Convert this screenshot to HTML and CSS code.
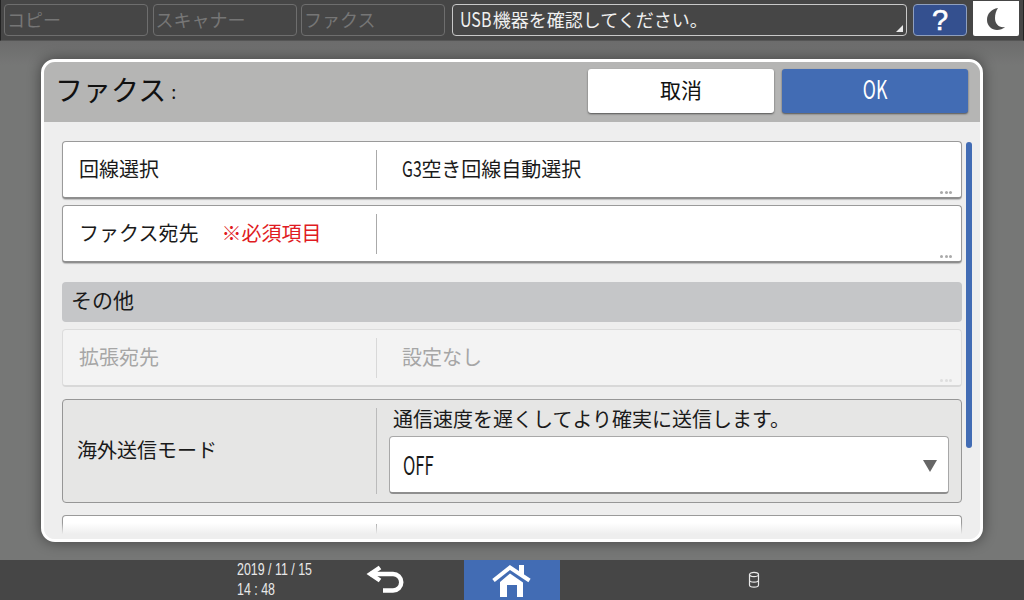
FILE: index.html
```html
<!DOCTYPE html>
<html lang="ja">
<head>
<meta charset="utf-8">
<title>ファクス</title>
<link rel="stylesheet" href="styles.css">
</head>
<body>
<div class="screen">
  <header class="topbar">
    <div class="tab">コピー</div>
    <div class="tab">スキャナー</div>
    <div class="tab">ファクス</div>
    <div class="status"><span class="n-usb">USB</span>機器を確認してください。<span class="corner"></span></div>
    <div class="help">?</div>
    <div class="sleep">
      <svg width="18" height="22" viewBox="0 0 18 22"><path class="moon" d="M11 0C4 1 0 6 0 12c0 6 5 10 10 10 3 0 6-1 8-3-6 1-10-3-10-9 0-4 1-7 3-10z"/></svg>
    </div>
  </header>
  <main class="stage">
    <section class="dialog">
      <div class="dialog-head">
        <div class="dialog-title">ファクス<span class="colon">:</span></div>
        <button class="btn btn-cancel">取消</button>
        <button class="btn btn-ok"><span class="n-ok">OK</span></button>
      </div>
      <div class="dialog-body">
        <div class="row">
          <div class="row-label">回線選択</div>
          <div class="row-value"><span class="n-g3">G3</span>空き回線自動選択</div>
          <span class="dots"><i></i><i></i><i></i></span>
        </div>
        <div class="row">
          <div class="row-label">ファクス宛先<span class="required">※必須項目</span></div>
          <div class="row-value"></div>
          <span class="dots"><i></i><i></i><i></i></span>
        </div>
        <div class="section">その他</div>
        <div class="row row-disabled">
          <div class="row-label">拡張宛先</div>
          <div class="row-value">設定なし</div>
          <span class="dots"><i></i><i></i><i></i></span>
        </div>
        <div class="row-group">
          <div class="group-label">海外送信モード</div>
          <div class="group-value">
            <div class="group-note">通信速度を遅くしてより確実に送信します。</div>
            <div class="select"><span class="n-off">OFF</span><span class="caret"></span></div>
          </div>
        </div>
        <div class="row row-cut">
          <div class="row-label"></div>
          <div class="row-value"></div>
        </div>
        <div class="scrollbar"></div>
        <div class="fade"></div>
      </div>
    </section>
  </main>
  <footer class="bottombar">
    <div class="clock">
      <div>2019 / 11 / 15</div>
      <div>14 : 48</div>
    </div>
    <div class="back">
      <svg width="38" height="30" viewBox="0 0 38 30"><path class="stroke-w" d="M4 9H27a8 8 0 0 1 0 16.500H17"/><path class="stroke-w" d="M14 2.500L4.500 9l9.500 6.500"/></svg>
    </div>
    <div class="home">
      <svg width="40" height="32" viewBox="0 0 40 32"><path class="fill-w" d="M27 0h5v11h-5z"/><path class="roof" d="M1.500 15.500L18 2.500l19.500 13"/><path class="fill-w" fill-rule="evenodd" d="M18 8.500L31 17.500V32H8V17zM15 20V32H25V20z"/></svg>
    </div>
    <div class="disk">
      <svg width="12" height="18" viewBox="0 0 12 18"><ellipse class="stroke-thin" cx="6" cy="3.500" rx="4.500" ry="2.200"/><path class="stroke-thin" d="M1.500 3.500V14c0 1.300 2 2.200 4.500 2.200s4.500-.9 4.500-2.200V3.500M1.500 9c0 1.300 2 2.200 4.500 2.200s4.500-.9 4.500-2.200"/></svg>
    </div>
  </footer>
</div>
</body>
</html>
```

FILE: styles.css
```css
* { box-sizing: border-box; }
html, body { margin: 0; padding: 0; }
body {
  width: 1024px;
  height: 600px;
  overflow: hidden;
  font-family: "Noto Sans CJK JP", "Noto Sans", sans-serif;
  color: #1a1a1a;
}
.screen { width: 1024px; height: 600px; display: flex; flex-direction: column; background: #767776; }

.n-usb, .n-g3, .n-ok, .n-off { display: inline-block; white-space: nowrap; }
.n-usb { font-size: 20px; transform: scaleX(.8); transform-origin: 0 50%; margin-right: -6px; line-height: 1; }
.n-g3 { font-size: 22px; transform: scaleX(.72); transform-origin: 0 50%; margin-right: -8px; line-height: 1; }
.n-ok { font-size: 26px; transform: scaleX(.68); line-height: 1; }
.n-off { font-size: 26px; transform: scaleX(.64); transform-origin: 0 50%; line-height: 1; }

.topbar {
  height: 41px;
  flex: none;
  display: flex;
  gap: 4.500px;
  padding: 4px 4px 5px 3px;
  background: #464646;
  border-left: 1px solid #222;
  border-right: 1px solid #222;
  border-bottom: 1px solid #555;
}
.tab {
  width: 144px;
  height: 32px;
  border: 1px solid #6e6e6e;
  border-radius: 4px;
  color: #767676;
  font-size: 18px;
  line-height: 29px;
  padding-left: 2px;
  white-space: nowrap;
}
.status {
  position: relative;
  width: 455.500px;
  height: 32px;
  margin-left: 2px;
  border: 1px solid #c8c8c8;
  border-radius: 4px;
  color: #f0f0f0;
  font-size: 18px;
  line-height: 29px;
  padding-left: 7px;
}
.corner {
  position: absolute;
  right: 3px;
  bottom: 3px;
  border-style: solid;
  border-width: 0 0 7px 7px;
  border-color: transparent transparent #e8e8e8 transparent;
}
.help {
  width: 54px;
  height: 32px;
  margin-left: 1.500px;
  background: #34508f;
  border: 1px solid #8f9fbe;
  border-radius: 4px;
  color: #fff;
  font-family: "Liberation Sans", sans-serif;
  font-size: 29px;
  line-height: 30px;
  text-align: center;
  -webkit-text-stroke: .6px #fff;
}
.sleep {
  width: 46px;
  height: 35px;
  margin-top: -3px;
  margin-left: 1.500px;
  background: #fff;
  border-radius: 0 0 2px 2px;
  display: flex;
  align-items: center;
  justify-content: center;
}
.moon { fill: #4d4d4d; }

.stage { flex: 1; min-height: 0; padding: 18px 41px; background: linear-gradient(#6c6c6c, #767776 24px); }
.dialog {
  height: 483px;
  display: flex;
  flex-direction: column;
  border: 3px solid #fff;
  border-radius: 14px;
  overflow: hidden;
  background: #eeeeee;
  box-shadow: 0 0 14px rgba(0, 0, 0, .45);
}
.dialog-head {
  height: 60px;
  flex: none;
  display: flex;
  align-items: flex-start;
  gap: 8px;
  padding: 7px 12px 0 11px;
  background: #b5b5b4;
}
.dialog-title { flex: 1; font-size: 28px; line-height: 40px; color: #111; }
.colon { font-size: 18px; margin-left: 5px; vertical-align: 2px; }
.btn {
  width: 186px;
  height: 44px;
  border: 0;
  border-radius: 3px;
  padding: 0 0 5px;
  font-family: inherit;
  font-size: 21px;
  box-shadow: 0 1px 2px rgba(0, 0, 0, .55);
}
.btn-cancel { background: #fff; color: #111; }
.btn-ok { background: #426cb4; color: #fff; padding-bottom: 3px; }

.dialog-body {
  position: relative;
  flex: 1;
  min-height: 0;
  overflow: hidden;
  padding: 19px 18px 0;
  display: flex;
  flex-direction: column;
}
.row {
  position: relative;
  flex: none;
  width: 900px;
  height: 58px;
  margin-bottom: 6px;
  display: flex;
  align-items: center;
  background: #fff;
  border: 1px solid #9a9a9a;
  border-bottom: 2px solid #8e8e8e;
  border-radius: 4px;
  box-shadow: 0 1px 1px rgba(0, 0, 0, .2);
  font-size: 20px;
}
.row-label {
  width: 314px;
  height: 40px;
  line-height: 37px;
  padding-left: 16px;
  border-right: 1px solid #aaa;
  white-space: nowrap;
}
.row-value { padding-left: 25px; white-space: nowrap; margin-top: -3px; }
.required { color: #e01b22; margin-left: 23px; }
.dots { position: absolute; right: 9px; bottom: 3px; display: flex; gap: 1.500px; }
.dots i { width: 3px; height: 3px; border-radius: 50%; background: #aaa; }

.section {
  flex: none;
  width: 900px;
  height: 40px;
  margin-top: 13px;
  margin-bottom: 7px;
  padding-left: 9px;
  background: #c5c6c8;
  border-radius: 4px;
  font-size: 21px;
  line-height: 35px;
}
.row-disabled { background: #f3f3f3; border: 1px solid #dcdcdc; border-bottom: 2px solid #d8d8d8; box-shadow: none; color: #a6a6a6; margin-bottom: 12px; }
.row-disabled .row-label { border-right-color: #d8d8d8; }
.row-disabled .dots i { background: #dedede; }

.row-group {
  flex: none;
  width: 900px;
  height: 104px;
  margin-bottom: 12px;
  display: flex;
  align-items: center;
  background: #e6e6e5;
  border: 1px solid #969696;
  border-radius: 4px;
  font-size: 20px;
}
.group-label {
  width: 314px;
  height: 86px;
  line-height: 83px;
  padding-left: 14px;
  border-right: 1px solid #bbb;
}
.group-value { display: flex; flex-direction: column; padding-left: 12px; }
.group-note { padding-left: 4px; height: 28px; line-height: 22px; margin-top: -1px; }
.select {
  position: relative;
  width: 560px;
  height: 58px;
  padding-left: 13px;
  display: flex;
  align-items: center;
  background: #fff;
  border: 1px solid #a8a8a8;
  border-bottom: 2px solid #8e8e8e;
  border-radius: 4px;
}
.caret {
  position: absolute;
  right: 11px;
  top: 23px;
  border-style: solid;
  border-width: 12px 7px 0 7px;
  border-color: #666 transparent transparent transparent;
}
.row-cut { height: 58px; margin-bottom: 0; }

.scrollbar {
  position: absolute;
  left: 922px;
  top: 20px;
  width: 6px;
  height: 306px;
  background: #426cb4;
  border-radius: 3px;
}
.fade {
  position: absolute;
  left: 0;
  right: 0;
  bottom: 0;
  height: 16px;
  background: linear-gradient(rgba(238, 238, 238, 0), #eeeeee 70%);
}

.bottombar {
  height: 40px;
  flex: none;
  display: flex;
  align-items: stretch;
  background: #464646;
  color: #e8e8e8;
}
.clock {
  width: 129px;
  margin-left: 237px;
  font-family: "Liberation Sans", sans-serif;
  font-size: 17px;
  white-space: nowrap;
  transform: scaleX(.73);
  transform-origin: 0 50%;
}
.clock div { height: 20px; line-height: 20px; }
.back { width: 98px; display: flex; align-items: center; }
.home {
  width: 96px;
  background: #426cb4;
  display: flex;
  align-items: center;
  justify-content: center;
  padding-top: 1px;
}
.disk { margin-left: 188px; display: flex; align-items: center; }
.stroke-w { fill: none; stroke: #fff; stroke-width: 4.500; }
.roof { fill: none; stroke: #fff; stroke-width: 4; }
.fill-w { fill: #fff; }
.stroke-thin { fill: none; stroke: #e8e8e8; stroke-width: 1.200; }
```
